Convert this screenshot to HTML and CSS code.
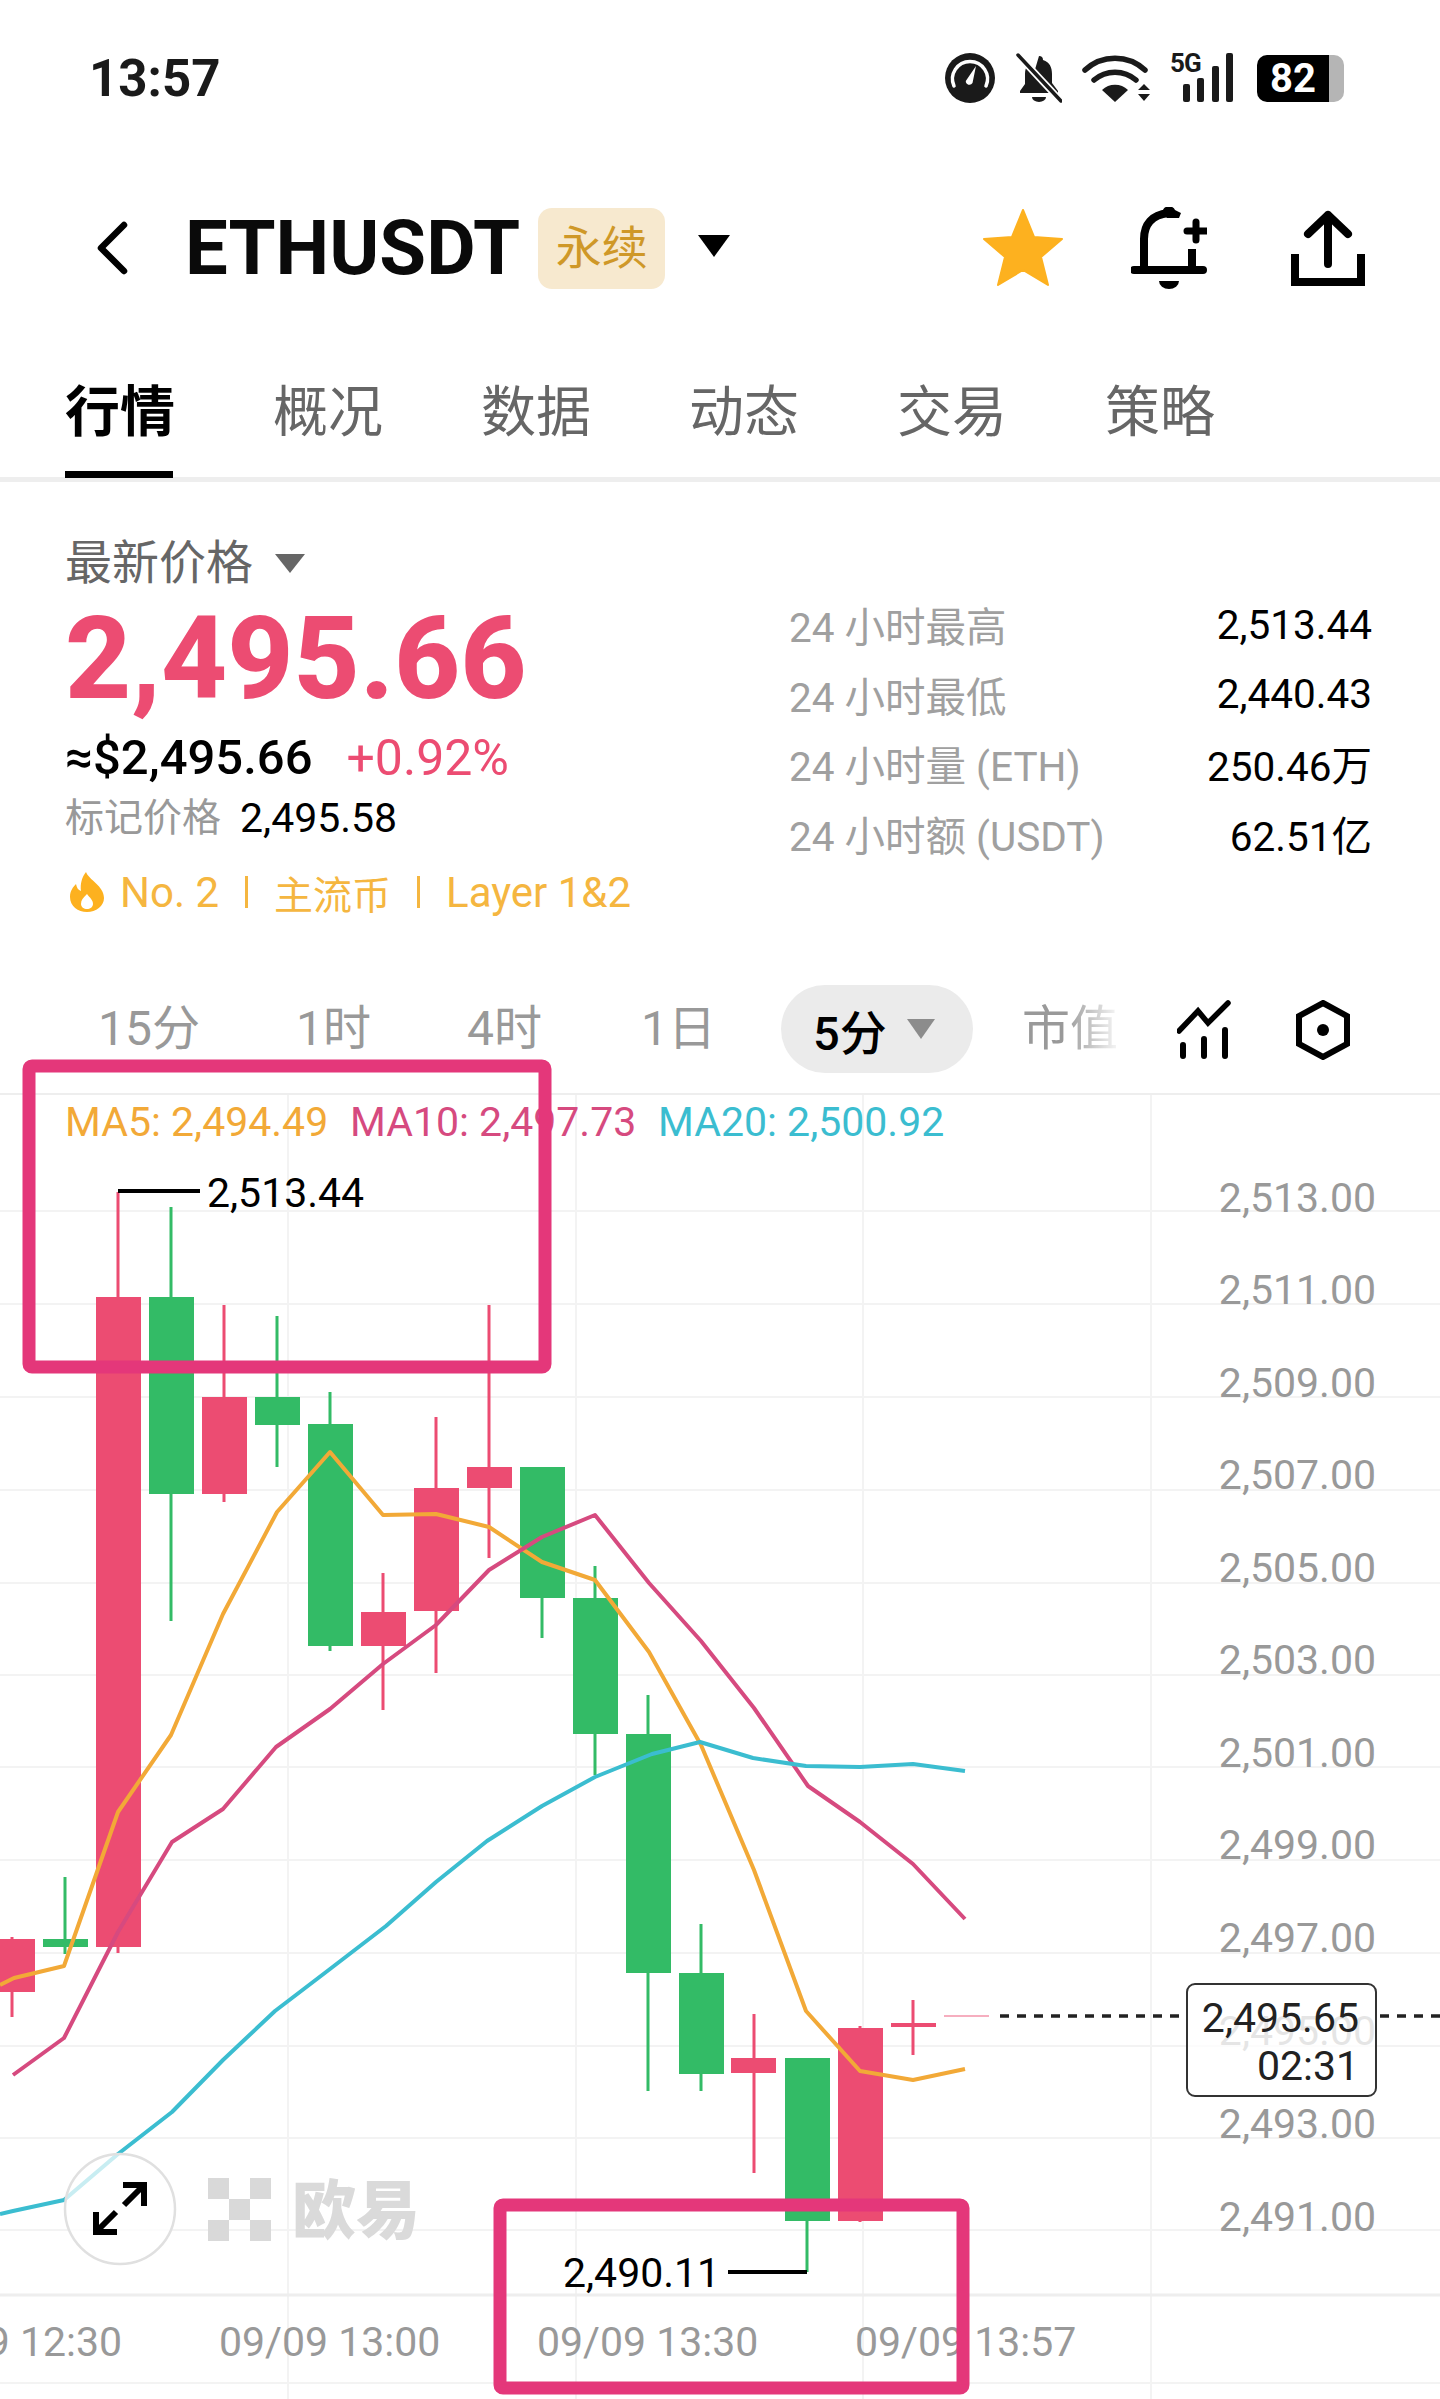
FILE: index.html
```html
<!DOCTYPE html>
<html lang="zh-CN">
<head>
    <meta charset="UTF-8">
    <meta name="viewport" content="width=device-width, initial-scale=1.0">
    <title>ETHUSDT 永续</title>
    <link rel="stylesheet" href="styles.css">
</head>
<body>
    <div class="status-bar">
        <span class="clock">13:57</span>
        <div class="status-icons">
            <svg class="ic-gauge" width="50" height="50" viewBox="0 0 50 50">
                <circle cx="25" cy="25" r="25" fill="#1a1a1a"/>
                <path d="M9 33A17.5 17.5 0 1 1 41 33" fill="none" stroke="#fff" stroke-width="3.5" stroke-linecap="round"/>
                <path d="M31 13L27.5 30A3.6 3.6 0 0 1 20.8 28Z" fill="#fff"/>
            </svg>
            <svg class="ic-mute" width="46" height="50" viewBox="0 0 46 50">
                <path d="M23 3a4 4 0 0 1 4 4c7 2 9 8 9 14v9l6 8v2H4v-2l5-7V21c0-3 .6-6 2-8l26 27H12z" fill="#1a1a1a"/>
                <path d="M16 44h14a7 5 0 0 1-14 0z" fill="#1a1a1a"/>
                <path d="M2 2L44 47" stroke="#fff" stroke-width="7"/>
                <path d="M2 2L45 48" stroke="#1a1a1a" stroke-width="3.5" stroke-linecap="round"/>
            </svg>
            <svg class="ic-wifi" width="68" height="50" viewBox="0 0 68 50">
                <path d="M3 17A44 44 0 0 1 63 17" fill="none" stroke="#1a1a1a" stroke-width="5.5" stroke-linecap="round"/>
                <path d="M12 27A32 32 0 0 1 54 27" fill="none" stroke="#1a1a1a" stroke-width="5.5" stroke-linecap="round"/>
                <path d="M20 37A19 19 0 0 1 46 37L33 49Z" fill="#1a1a1a"/>
                <path d="M56 37L62 31L68 37ZM56 41L62 48L68 41Z" fill="#1a1a1a"/>
            </svg>
            <div class="signal">
                <span class="net">5G</span>
                <svg width="50" height="50" viewBox="0 0 50 50">
                    <rect x="0" y="31" width="7" height="18" rx="2" fill="#1a1a1a"/>
                    <rect x="14" y="25" width="7" height="24" rx="2" fill="#1a1a1a"/>
                    <rect x="29" y="13" width="7" height="36" rx="2" fill="#1a1a1a"/>
                    <rect x="43" y="0" width="7" height="49" rx="2" fill="#1a1a1a"/>
                </svg>
            </div>
            <div class="battery"><span class="battery-fill">82</span><span class="battery-rest"></span></div>
        </div>
    </div>

    <div class="nav">
        <svg class="ic-back" width="36" height="56" viewBox="0 0 36 56">
            <path d="M30 5L7 28L30 51" fill="none" stroke="#000" stroke-width="6.5" stroke-linecap="round" stroke-linejoin="round"/>
        </svg>
        <h1 class="symbol">ETHUSDT</h1>
        <span class="tag">永续</span>
        <span class="caret-big"></span>
        <div class="nav-actions">
            <svg class="ic-star" width="80" height="78" viewBox="0 0 80 78">
                <path d="M40 1L51 28L79 30L58 48L65 76L40 61L15 76L22 48L1 30L29 28Z" fill="#fdb11f" stroke="#fdb11f" stroke-width="2" stroke-linejoin="round"/>
            </svg>
            <svg width="76" height="82" viewBox="0 0 76 82">
                <path d="M13 62V32C13 17 21 8 37 6" fill="none" stroke="#000" stroke-width="8"/>
                <path d="M32 6a6 5 0 0 1 12-3l6 3-2 5H36z" fill="#000"/>
                <path d="M61 42V62" fill="none" stroke="#000" stroke-width="8"/>
                <path d="M3 63H72" stroke="#000" stroke-width="8" stroke-linecap="round"/>
                <path d="M56 24H75M65 15V33" stroke="#000" stroke-width="7" stroke-linecap="round"/>
                <path d="M28 74H48A10 8 0 0 1 28 74Z" fill="#000"/>
            </svg>
            <svg width="74" height="76" viewBox="0 0 74 76">
                <path d="M4 44V72H70V44" fill="none" stroke="#000" stroke-width="8" stroke-linejoin="miter"/>
                <path d="M37 54V5M17 24L37 5L57 24" fill="none" stroke="#000" stroke-width="8" stroke-linecap="round" stroke-linejoin="round"/>
            </svg>
        </div>
    </div>

    <div class="tabs">
        <a class="tab active">行情</a>
        <a class="tab">概况</a>
        <a class="tab">数据</a>
        <a class="tab">动态</a>
        <a class="tab">交易</a>
        <a class="tab">策略</a>
    </div>

    <div class="summary">
        <div class="quote">
            <div class="quote-label">最新价格<span class="caret-small"></span></div>
            <div class="price">2,495.66</div>
            <div class="usd-line"><span>≈$2,495.66</span><span class="change">+0.92%</span></div>
            <div class="mark-line"><span class="mark-label">标记价格</span><span>2,495.58</span></div>
            <div class="tags">
                <svg width="34" height="40" viewBox="0 0 34 40">
                    <path fill-rule="evenodd" d="M16 0C19 8 34 14 34 26C34 34 26 40 17 40C8 40 0 34 0 25C0 19 3 15 6 12C7 16 8 18 11 19C10 12 12 5 16 0ZM17 22C13 26 11 28 11 32C11 35 14 37 17 37C20 37 23 35 23 32C23 28 20 26 17 22Z" fill="#fdb11f"/>
                </svg>
                <span>No. 2</span>
                <i class="sep"></i>
                <span class="tag-cjk">主流币</span>
                <i class="sep"></i>
                <span>Layer 1&amp;2</span>
            </div>
        </div>
        <dl class="stats">
            <div class="stat-row"><dt>24 小时最高</dt><dd>2,513.44</dd></div>
            <div class="stat-row"><dt>24 小时最低</dt><dd>2,440.43</dd></div>
            <div class="stat-row"><dt>24 小时量 (ETH)</dt><dd>250.46万</dd></div>
            <div class="stat-row"><dt>24 小时额 (USDT)</dt><dd>62.51亿</dd></div>
        </dl>
    </div>

    <div class="intervals">
        <span class="interval">15分</span>
        <span class="interval">1时</span>
        <span class="interval">4时</span>
        <span class="interval day">1日</span>
        <span class="interval-pill">5分<span class="caret-pill"></span></span>
        <span class="interval fade">市值</span>
        <svg class="ic-indicator" width="56" height="60" viewBox="0 0 56 60">
            <path d="M2 31L21 11L31 23L51 3" fill="none" stroke="#000" stroke-width="5.5" stroke-linecap="round"/>
            <path d="M6 45V56M27 39V56M48 30V56" fill="none" stroke="#000" stroke-width="6" stroke-linecap="round"/>
        </svg>
        <svg class="ic-hex" width="56" height="60" viewBox="0 0 56 60">
            <path d="M28 3L52 16V44L28 57L4 44V16Z" fill="none" stroke="#000" stroke-width="6"/>
            <circle cx="28" cy="30" r="6" fill="#000"/>
        </svg>
    </div>

    <div class="chart">
        <svg class="chart-svg" width="1440" height="1304" viewBox="0 1095 1440 1304">
            <g class="grid">
                <path d="M0 1211H1440M0 1304H1440M0 1397H1440M0 1490H1440M0 1583H1440M0 1675H1440M0 1767H1440M0 1860H1440M0 1953H1440M0 2046H1440M0 2138H1440M0 2230H1440M0 2383H1440"/>
                <path d="M288 1095V2399M576 1095V2399M863 1095V2399M1151 1095V2399"/>
                <path class="axis" d="M0 2295H1440"/>
            </g>

            <g class="wm">
                <rect x="208" y="2178" width="21" height="21"/>
                <rect x="250" y="2178" width="21" height="21"/>
                <rect x="229" y="2199" width="21" height="21"/>
                <rect x="208" y="2220" width="21" height="21"/>
                <rect x="250" y="2220" width="21" height="21"/>
                <text class="wm-text" x="292" y="2233">欧易</text>
            </g>

            <g class="axis-y">
                <text x="1376" y="1212">2,513.00</text>
                <text x="1376" y="1304">2,511.00</text>
                <text x="1376" y="1397">2,509.00</text>
                <text x="1376" y="1489">2,507.00</text>
                <text x="1376" y="1582">2,505.00</text>
                <text x="1376" y="1674">2,503.00</text>
                <text x="1376" y="1767">2,501.00</text>
                <text x="1376" y="1859">2,499.00</text>
                <text x="1376" y="1952">2,497.00</text>
                <text x="1376" y="2045">2,495.00</text>
                <text x="1376" y="2138">2,493.00</text>
                <text x="1376" y="2231">2,491.00</text>
            </g>

            <g class="axis-x">
                <text x="122" y="2356" text-anchor="end">09/09 12:30</text>
                <text x="219" y="2356">09/09 13:00</text>
                <text x="537" y="2356">09/09 13:30</text>
                <text x="855" y="2356">09/09 13:57</text>
            </g>

            <g class="candles up">
                <path class="wick" d="M65 1877V1954M171 1207V1621M277 1316V1467M330 1392V1651M542 1467V1638M595 1566V1775M648 1695V2091M701 1924V2091M807 2058V2272"/>
                <rect x="43" y="1939" width="45" height="8"/>
                <rect x="149" y="1297" width="45" height="197"/>
                <rect x="255" y="1397" width="45" height="28"/>
                <rect x="308" y="1424" width="45" height="222"/>
                <rect x="520" y="1467" width="45" height="131"/>
                <rect x="573" y="1598" width="45" height="136"/>
                <rect x="626" y="1734" width="45" height="239"/>
                <rect x="679" y="1973" width="45" height="101"/>
                <rect x="785" y="2058" width="45" height="163"/>
            </g>
            <g class="candles down">
                <path class="wick" d="M12 1937V2017M118 1192V1953M224 1305V1502M383 1573V1710M436 1417V1673M489 1305V1558M754 2014V2173M860 2026V2222M913 2000V2055"/>
                <rect x="-10" y="1939" width="45" height="53"/>
                <rect x="96" y="1297" width="45" height="650"/>
                <rect x="202" y="1397" width="45" height="97"/>
                <rect x="361" y="1612" width="45" height="34"/>
                <rect x="414" y="1488" width="45" height="123"/>
                <rect x="467" y="1467" width="45" height="21"/>
                <rect x="731" y="2058" width="45" height="15"/>
                <rect x="838" y="2028" width="45" height="193"/>
                <rect x="891" y="2023" width="45" height="4"/>
            </g>

            <polyline class="ma ma5" points="0,1985 14,1978 64,1966 118,1812 171,1735 223,1614 277,1512 330,1452 383,1515 436,1514 489,1527 542,1562 595,1580 649,1652 701,1745 754,1870 806,2011 860,2071 913,2080 965,2069"/>
            <polyline class="ma ma10" points="13,2075 64,2038 118,1932 172,1842 223,1809 276,1747 330,1709 383,1664 436,1625 489,1570 542,1537 595,1515 649,1583 701,1641 754,1708 808,1786 860,1822 913,1864 965,1919"/>
            <polyline class="ma ma20" points="0,2214 13,2211 64,2200 118,2154 172,2112 223,2060 275,2011 330,1969 386,1926 436,1882 487,1841 542,1806 595,1777 652,1754 700,1742 753,1758 806,1766 860,1767 913,1764 965,1771"/>

            <path class="last-tick" d="M944 2016H989"/>
            <path class="last-line" d="M1000 2016H1187M1380 2016H1440"/>
            <rect class="last-box" x="1187" y="1984" width="189" height="112" rx="8"/>
            <text class="last-text" x="1359" y="2032">2,495.65</text>
            <text class="last-text" x="1359" y="2080">02:31</text>

            <path class="mark" d="M118 1191H200M728 2272H807"/>
            <text class="mark-text" x="207" y="1207">2,513.44</text>
            <text class="mark-text" x="563" y="2287">2,490.11</text>

            <circle class="zoom-btn" cx="120" cy="2209" r="55"/>
            <path class="zoom-arrow" d="M96 2232L116 2212M124 2205L144 2185M96 2212V2232H117M123 2185H144V2206"/>

            <g class="legend">
                <text class="l5" x="65" y="1136">MA5: 2,494.49</text>
                <text class="l10" x="350" y="1136">MA10: 2,497.73</text>
                <text class="l20" x="658" y="1136">MA20: 2,500.92</text>
            </g>

            <rect class="highlight" x="29" y="1066" width="516" height="301" rx="3"/>
            <rect class="highlight" x="500" y="2205" width="463" height="183" rx="3"/>
        </svg>
    </div>
</body>
</html>
```

FILE: styles.css
```css
* {
    box-sizing: border-box;
}
body {
    margin: 0;
    width: 1440px;
    height: 2399px;
    overflow: hidden;
    background: #fff;
    color: #000;
    font-family: Roboto, "Noto Sans CJK SC", sans-serif;
}
.status-bar {
    height: 156px;
    padding: 0 96px 0 89px;
    display: flex;
    align-items: center;
    justify-content: space-between;
}
.clock {
    font-size: 51px;
    font-weight: 700;
    color: #1a1a1a;
}
.status-icons {
    display: flex;
    align-items: center;
}
.ic-mute {
    margin-left: 21px;
}
.ic-wifi {
    margin-left: 20px;
}
.signal {
    position: relative;
    margin-left: 33px;
    display: flex;
}
.net {
    position: absolute;
    left: -13px;
    top: -3px;
    font-size: 26px;
    line-height: 26px;
    font-weight: 700;
    letter-spacing: -1px;
    color: #1a1a1a;
}
.battery {
    margin-left: 24px;
    display: flex;
    align-items: center;
}
.battery-fill {
    width: 72px;
    height: 47px;
    background: #000;
    color: #fff;
    border-radius: 10px 0 0 10px;
    font-size: 40px;
    line-height: 47px;
    font-weight: 700;
    text-align: center;
}
.battery-rest {
    width: 15px;
    height: 47px;
    background: #b5b5b5;
    border-radius: 0 10px 10px 0;
}
.nav {
    height: 184px;
    padding-left: 94px;
    padding-right: 75px;
    display: flex;
    align-items: center;
}
.symbol {
    margin: 0 0 0 55px;
    font-size: 76px;
    font-weight: 700;
    line-height: 1;
    color: #0a0a0a;
}
.tag {
    margin-left: 18px;
    width: 127px;
    height: 81px;
    border-radius: 14px;
    background: #f7e9cf;
    color: #cf9828;
    font-size: 46px;
    line-height: 81px;
    text-align: center;
}
.caret-big {
    margin: 0 0 4px 33px;
    border-top: 22px solid #000;
    border-left: 16px solid transparent;
    border-right: 16px solid transparent;
}
.nav-actions {
    margin-left: auto;
    display: flex;
    align-items: center;
    gap: 84px;
}
.ic-star {
    margin-right: -16px;
}
.tabs {
    height: 142px;
    padding: 37px 0 0 65px;
    display: flex;
    gap: 100px;
    border-bottom: 5px solid #eee;
}
.tab {
    width: 108px;
    height: 101px;
    font-size: 55px;
    line-height: 70px;
    color: #666;
    white-space: nowrap;
}
.tab.active {
    color: #000;
    font-weight: 700;
    border-bottom: 7px solid #000;
}
.summary {
    height: 478px;
    padding: 51px 68px 0 65px;
    display: flex;
    justify-content: space-between;
}
.quote-label {
    height: 60px;
    font-size: 47px;
    line-height: 60px;
    color: #666;
    display: flex;
    align-items: center;
}
.caret-small {
    margin-left: 22px;
    border-top: 19px solid #666;
    border-left: 15px solid transparent;
    border-right: 15px solid transparent;
}
.price {
    height: 120px;
    font-size: 115px;
    line-height: 132px;
    font-weight: 800;
    color: #ec4c72;
}
.usd-line {
    margin-top: 20px;
    display: flex;
    gap: 34px;
    font-size: 49px;
    line-height: 50px;
    font-weight: 500;
}
.change {
    color: #ec4c72;
    font-weight: 400;
    font-size: 50px;
}
.mark-line {
    margin-top: 10px;
    display: flex;
    gap: 19px;
    font-size: 41px;
    line-height: 50px;
}
.mark-label {
    color: #999;
    font-size: 39px;
}
.tags {
    margin-top: 24px;
    margin-left: 5px;
    height: 50px;
    display: flex;
    align-items: center;
    font-size: 42px;
    color: #f5b640;
}
.tags svg {
    margin-right: 16px;
}
.tag-cjk {
    font-size: 39px;
}
.sep {
    width: 3px;
    height: 32px;
    margin: 0 26px;
    background: #f5b640;
}
.stats {
    width: 583px;
    margin: 57px 0 0;
}
.stat-row {
    height: 69.6px;
    display: flex;
    justify-content: space-between;
    align-items: center;
    font-size: 40.5px;
}
.stat-row dt {
    color: #a0a0a0;
}
.stat-row dd {
    margin: 0;
}
.intervals {
    height: 133px;
    padding: 25px 0 0 98px;
    display: flex;
    align-items: flex-start;
    gap: 96px;
}
.interval {
    height: 88px;
    font-size: 48px;
    line-height: 88px;
    color: #999;
    white-space: nowrap;
}
.day {
    margin-left: 3px;
}
.interval-pill {
    margin-left: -31px;
    width: 192px;
    height: 88px;
    padding-left: 32px;
    border-radius: 44px;
    background: #ebebeb;
    display: flex;
    align-items: center;
    font-size: 47px;
    font-weight: 500;
}
.caret-pill {
    margin-left: 20px;
    border-top: 20px solid #8c8c8c;
    border-left: 14px solid transparent;
    border-right: 14px solid transparent;
}
.fade {
    margin-left: -47px;
    -webkit-mask-image: linear-gradient(to right, #000 45%, transparent 105%);
    mask-image: linear-gradient(to right, #000 45%, transparent 105%);
}
.ic-indicator {
    margin: 15px 0 0 -37px;
}
.ic-hex {
    margin: 15px 0 0 -34px;
}
.chart {
    border-top: 2px solid #eee;
    height: 1306px;
}
.chart-svg {
    display: block;
    overflow: visible;
}
.grid path {
    fill: none;
    stroke: #f3f3f3;
    stroke-width: 2;
}
.grid .axis {
    stroke: #eee;
    stroke-width: 3;
}
.wm rect {
    fill: #d9d9d9;
}
.chart-svg text {
    font-size: 41px;
}
.chart-svg .wm-text {
    font-family: "Noto Sans CJK SC", sans-serif;
    font-size: 64px;
    font-weight: 900;
    fill: #dadada;
}
.axis-y text {
    fill: #999;
    text-anchor: end;
}
.axis-x text {
    fill: #999;
}
.candles .wick {
    fill: none;
    stroke-width: 3;
}
.up rect {
    fill: #33bb66;
}
.up .wick {
    stroke: #33bb66;
}
.down rect {
    fill: #ec4c72;
}
.down .wick {
    stroke: #ec4c72;
}
.ma {
    fill: none;
    stroke-width: 4;
    stroke-linejoin: round;
}
.ma5 {
    stroke: #f2a937;
}
.ma10 {
    stroke: #d64a7f;
}
.ma20 {
    stroke: #3bbdd0;
}
.last-tick {
    stroke: #ec4c72;
    stroke-width: 1.5;
    opacity: .6;
}
.last-line {
    stroke: #222;
    stroke-width: 3.5;
    stroke-dasharray: 9 8;
}
.last-box {
    fill: rgba(255, 255, 255, .75);
    stroke: #333;
    stroke-width: 2;
}
.chart-svg .last-text {
    fill: #222;
    text-anchor: end;
}
.mark {
    fill: none;
    stroke: #000;
    stroke-width: 4;
}
.chart-svg .mark-text {
    fill: #000;
}
.zoom-btn {
    fill: rgba(255, 255, 255, .72);
    stroke: #e0e0e0;
    stroke-width: 2.5;
}
.zoom-arrow {
    fill: none;
    stroke: #000;
    stroke-width: 6;
}
.l5 {
    fill: #f2a937;
}
.l10 {
    fill: #d64a7f;
}
.l20 {
    fill: #3bbdd0;
}
.highlight {
    fill: none;
    stroke: #e4377a;
    stroke-width: 13;
}
```
